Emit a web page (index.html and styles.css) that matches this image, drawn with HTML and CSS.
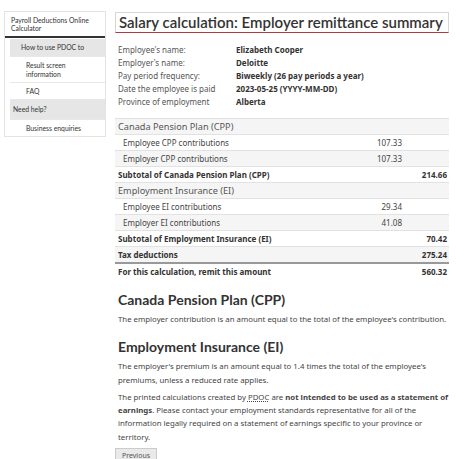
FILE: index.html
```html
<!doctype html>
<html>

<head>
	<meta charset="UTF-8">
	<title>Salary calculation: Employer remittance summary</title>
	<link rel="stylesheet" href="styles.css">
</head>

<body>
	<div class="page">
		<nav class="side">
			<div class="side_title">Payroll Deductions Online Calculator</div>
			<ul class="side_menu">
				<li class="grp">How to use PDOC to</li>
				<li class="sub">Result screen information</li>
				<li class="sub">FAQ</li>
				<li class="grp left">Need help?</li>
				<li class="sub">Business enquiries</li>
			</ul>
		</nav>
		<main class="main">
			<h1>Salary calculation: Employer remittance summary</h1>
			<dl class="info">
				<dt>Employee's name:</dt>
				<dd>Elizabeth Cooper</dd>
				<dt>Employer's name:</dt>
				<dd>Deloitte</dd>
				<dt>Pay period frequency:</dt>
				<dd>Biweekly (26 pay periods a year)</dd>
				<dt>Date the employee is paid</dt>
				<dd>2023-05-25 (YYYY-MM-DD)</dd>
				<dt>Province of employment</dt>
				<dd>Alberta</dd>
			</dl>
			<table class="sum">
				<tr class="head">
					<td>Canada Pension Plan (CPP)</td>
					<td></td>
					<td></td>
				</tr>
				<tr>
					<td class="ind">Employee CPP contributions</td>
					<td class="num">107.33</td>
					<td></td>
				</tr>
				<tr>
					<td class="ind">Employer CPP contributions</td>
					<td class="num">107.33</td>
					<td></td>
				</tr>
				<tr class="b">
					<td>Subtotal of Canada Pension Plan (CPP)</td>
					<td></td>
					<td class="num">214.66</td>
				</tr>
				<tr class="head">
					<td>Employment Insurance (EI)</td>
					<td></td>
					<td></td>
				</tr>
				<tr>
					<td class="ind">Employee EI contributions</td>
					<td class="num">29.34</td>
					<td></td>
				</tr>
				<tr>
					<td class="ind">Employer EI contributions</td>
					<td class="num">41.08</td>
					<td></td>
				</tr>
				<tr class="b">
					<td>Subtotal of Employment Insurance (EI)</td>
					<td></td>
					<td class="num">70.42</td>
				</tr>
				<tr class="b">
					<td>Tax deductions</td>
					<td></td>
					<td class="num">275.24</td>
				</tr>
				<tr class="b total">
					<td>For this calculation, remit this amount</td>
					<td></td>
					<td class="num">560.32</td>
				</tr>
			</table>

			<h2>Canada Pension Plan (CPP)</h2>
			<p>The employer contribution is an amount equal to the total of the employee's contribution.</p>

			<h2>Employment Insurance (EI)</h2>
			<p>The employer's premium is an amount equal to 1.4 times the total of the employee's premiums, unless a reduced rate applies.</p>
			<p>The printed calculations created by <abbr>PDOC</abbr> are <strong>not intended to be used as a statement of earnings</strong>. Please contact your employment standards representative for all of the information legally required on a statement of earnings specific to your province or territory.</p>
			<button class="btn">Previous</button>
		</main>
	</div>
</body>

</html>
```

FILE: styles.css
```css
body {
	margin: 0;
	font-family: "Noto Sans", sans-serif;
	color: #333;
	background: #fff;
}

.page {
	display: flex;
	align-items: flex-start;
}

/*左侧菜单*/
.side {
	width: 100px;
	margin: 11px 0 0 4px;
	border: 1px solid #e3e3e3;
	font-family: Lato, sans-serif;
	font-size: 6.8px;
	color: #333;
}

.side_title {
	padding: 4px 6px 4px;
	line-height: 8px;
	border-bottom: 2px solid #333;
}

.side_menu {
	list-style: none;
	margin: 1px 0 0 5px;
	padding: 0;
}

.side_menu li {
	border-bottom: 1px solid #e8e8e8;
	padding: 3.5px 8px 3.5px 16px;
	line-height: 9px;
}

.side_menu .grp {
	background: #e6e6e6;
	padding: 4px 0 4px 11px;
}

.side_menu .left {
	padding: 5px 0 5px 3px;
}

.side_menu li:last-child {
	border-bottom: none;
}

/*主体*/
.main {
	width: 334px;
	margin-left: 9px;
}

h1 {
	margin: 12px 0 0;
	padding: 0 3px;
	border: 1px solid #d6d6d6;
	border-bottom: 1px solid #af3c43;
	font-family: Lato, sans-serif;
	font-weight: 600;
	font-size: 15px;
	line-height: 19px;
	white-space: nowrap;
	color: #333;
}

.info {
	display: grid;
	grid-template-columns: 121px 1fr;
	margin: 10px 0 0;
	font-size: 8px;
	line-height: 13px;
}

.info dt {
	padding-left: 3px;
	color: #555;
}

.info dd {
	margin: 0;
	font-weight: bold;
	color: #333;
}

.sum {
	width: 100%;
	margin-top: 10px;
	border-collapse: collapse;
	font-size: 8px;
	line-height: 11px;
	color: #444;
}

.sum td {
	padding: 2px 2px 2px 3px;
	border-top: 1px solid #e2e2e2;
}

.sum tr:nth-child(odd) {
	background: #f5f5f5;
}

.sum td:nth-child(2) {
	width: 60px;
}

.sum td:nth-child(3) {
	width: 40px;
}

.sum .head td {
	font-size: 9.2px;
	color: #555;
}

.sum .ind {
	padding-left: 8px;
}

.sum .num {
	text-align: right;
}

.sum .b td {
	font-weight: bold;
	color: #333;
}

.sum .total td {
	border-top: 2px solid #999;
}

h2 {
	margin: 12px 0 0;
	padding-left: 3px;
	font-family: Lato, sans-serif;
	font-weight: bold;
	font-size: 14px;
	line-height: 18px;
	color: #333;
}

p {
	margin: 4px 0 0;
	padding-left: 3px;
	font-size: 7.8px;
	line-height: 13.3px;
	color: #444;
}

abbr {
	text-decoration: underline dotted;
}

.btn {
	display: block;
	margin: 4px 0 0;
	padding: 2px 6px;
	border: 1px solid #ccc;
	background: #eaeaea;
	font-family: "Noto Sans", sans-serif;
	font-size: 7px;
	color: #555;
}
```
